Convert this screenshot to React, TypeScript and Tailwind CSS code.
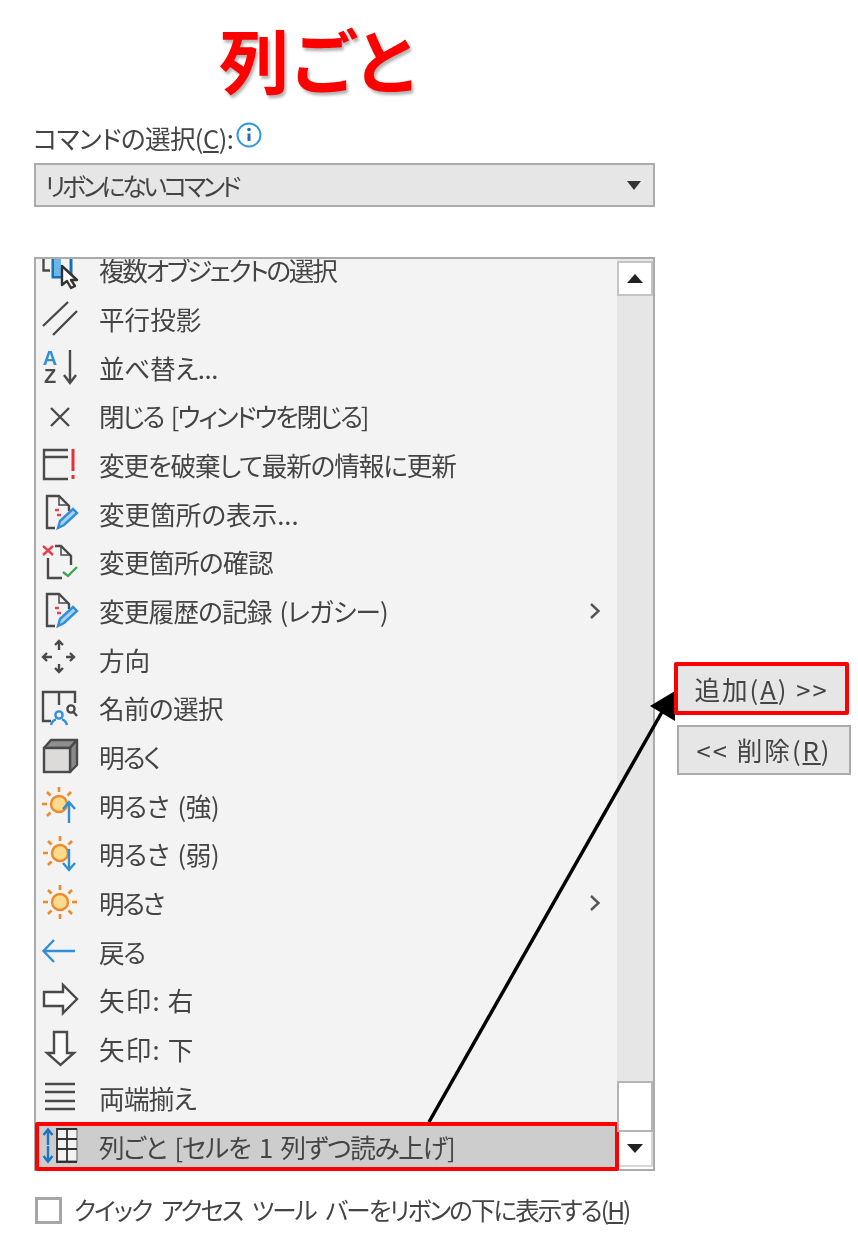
import type { ReactNode } from "react";

const BLUE = "#2f8fd8";
const DARK = "#4a4a4a";
const ORANGE = "#ee8a2a";

function Icon({ children }: { children: ReactNode }) {
  return (
    <svg width="40" height="40" viewBox="0 0 40 40" fill="none" strokeWidth="2.4" className="shrink-0 overflow-visible">
      {children}
    </svg>
  );
}

function DocPencil() {
  return (
    <Icon>
      <path d="M15 35H7V3H19L29 13V18" stroke={DARK} />
      <path d="M19 3V12H29" stroke={DARK} strokeWidth="1.5" />
      <path d="M15 17H19M17 22H21" stroke="#e8404a" />
      <path d="M18 35L20 28L33 16L37 20L24 32Z" fill="#a9d3f3" stroke={BLUE} />
    </Icon>
  );
}

function Sun({ cx, cy, bare }: { cx: number; cy: number; bare?: boolean }) {
  const rays = [0, 45, 90, 135, 180, 225, 270, 315];
  return (
    <g>
      <circle cx={cx} cy={cy} r="8" fill="#fbdc8e" stroke={ORANGE} />
      {rays.map((a) => {
        if (!bare && (a === 0 || a === 45 || a === 90)) return null;
        const r = (a * Math.PI) / 180;
        return (
          <line
            key={a}
            x1={cx + Math.cos(r) * 12}
            y1={cy + Math.sin(r) * 12}
            x2={cx + Math.cos(r) * 17}
            y2={cy + Math.sin(r) * 17}
            stroke={ORANGE}
            strokeWidth="2.6"
          />
        );
      })}
    </g>
  );
}

const rows: { label: string; icon: ReactNode; track: string; more?: boolean; selected?: boolean }[] = [
  {
    label: "複数オブジェクトの選択",
    track: "tracking-[-2.3px]",
    icon: (
      <Icon>
        <path d="M3.5 6V20.5H10" stroke={DARK} />
        <rect x="13" y="6" width="18" height="21" fill="#f3f3f3" stroke="#1472bd" strokeWidth="3" />
        <rect x="14" y="7" width="7" height="19" fill="#6db4e8" />
        <path d="M22 16L37 30H31L35 36L31 38L27 31L22 35Z" fill="#fff" stroke="#333" strokeLinejoin="round" />
      </Icon>
    ),
  },
  {
    label: "平行投影",
    track: "tracking-[0px]",
    icon: (
      <Icon>
        <path d="M3 27L28 3M13 36L37 12" stroke={DARK} />
      </Icon>
    ),
  },
  {
    label: "並べ替え...",
    track: "tracking-[-0.4px]",
    icon: (
      <Icon>
        <text x="10" y="18" textAnchor="middle" fontSize="20" fontWeight="700" fontFamily="'Liberation Sans', sans-serif" fill={BLUE}>A</text>
        <text x="10" y="36" textAnchor="middle" fontSize="20" fontWeight="700" fontFamily="'Liberation Sans', sans-serif" fill={DARK}>Z</text>
        <path d="M30 3V35M24 28L30 36L36 28" stroke={DARK} />
      </Icon>
    ),
  },
  {
    label: "閉じる [ウィンドウを閉じる]",
    track: "tracking-[-2.2px] [word-spacing:4px]",
    icon: (
      <Icon>
        <path d="M11 12L29 30M29 12L11 30" stroke={DARK} />
      </Icon>
    ),
  },
  {
    label: "変更を破棄して最新の情報に更新",
    track: "tracking-[-1.1px]",
    icon: (
      <Icon>
        <path d="M28 5H4V34H28M4 12H28" stroke={DARK} />
        <path d="M33 4V26" stroke="#e8303a" strokeWidth="3" />
        <path d="M33 30V34" stroke="#e8303a" strokeWidth="3" />
      </Icon>
    ),
  },
  { label: "変更箇所の表示...", track: "tracking-[0px]", icon: <DocPencil /> },
  {
    label: "変更箇所の確認",
    track: "tracking-[-0.6px]",
    icon: (
      <Icon>
        <path d="M3 4L13 13M13 4L3 13" stroke="#e8404a" />
        <path d="M15 4H21L31 14V23M8 16V36H22" stroke={DARK} />
        <path d="M21 4V13H31" stroke={DARK} strokeWidth="1.5" />
        <path d="M23 30L28 34L37 25" stroke="#3fa652" />
      </Icon>
    ),
  },
  { label: "変更履歴の記録 (レガシー)", track: "tracking-[-0.8px] [word-spacing:3px]", icon: <DocPencil />, more: true },
  {
    label: "方向",
    track: "tracking-[0px]",
    icon: (
      <Icon>
        <path d="M19 2V11M15 6L19 2L23 6M19 25V33M15 29L19 33L23 29M3 18H12M7 14L3 18L7 22M26 18H34M30 14L34 18L30 22" stroke={DARK} />
      </Icon>
    ),
  },
  {
    label: "名前の選択",
    track: "tracking-[-0.6px]",
    icon: (
      <Icon>
        <path d="M11 33H3V4H19V17M19 4H35V15" stroke={DARK} />
        <circle cx="19" cy="27" r="3.6" stroke={BLUE} />
        <path d="M11 37C12 33 15 31.5 16 31.5M27 37C26 33 23 31.5 22 31.5" stroke={BLUE} />
        <circle cx="31" cy="21" r="3.6" stroke={DARK} />
        <path d="M33.5 24L37 28" stroke={DARK} />
      </Icon>
    ),
  },
  {
    label: "明るく",
    track: "tracking-[-2px]",
    icon: (
      <Icon>
        <path d="M4 11L11 3H37L30 11Z" fill="#8f8f8f" stroke={DARK} strokeLinejoin="round" />
        <path d="M30 11L37 3V28L30 35Z" fill="#8a8a8a" stroke={DARK} strokeLinejoin="round" />
        <rect x="4" y="11" width="26" height="24" fill="#dcdbd9" stroke={DARK} />
      </Icon>
    ),
  },
  {
    label: "明るさ (強)",
    track: "tracking-[-0.4px] [word-spacing:3px]",
    icon: (
      <Icon>
        <Sun cx={19} cy={18} />
        <path d="M29 37V17M23 23L29 16L35 23" stroke={BLUE} />
      </Icon>
    ),
  },
  {
    label: "明るさ (弱)",
    track: "tracking-[-0.4px] [word-spacing:3px]",
    icon: (
      <Icon>
        <Sun cx={20} cy={19} />
        <path d="M29 15V35M23 29L29 36L35 29" stroke={BLUE} />
      </Icon>
    ),
  },
  {
    label: "明るさ",
    track: "tracking-[-2.5px]",
    icon: (
      <Icon>
        <Sun cx={20} cy={19} bare />
      </Icon>
    ),
    more: true,
  },
  {
    label: "戻る",
    track: "tracking-[-1.5px]",
    icon: (
      <Icon>
        <path d="M4 19H35M14 8L3.5 19L14 30" stroke={BLUE} />
      </Icon>
    ),
  },
  {
    label: "矢印: 右",
    track: "tracking-[1.2px]",
    icon: (
      <Icon>
        <path d="M4 12H23V5L37 19L23 33V26H4Z" fill="#fbfbfb" stroke={DARK} strokeLinejoin="miter" />
      </Icon>
    ),
  },
  {
    label: "矢印: 下",
    track: "tracking-[1.2px]",
    icon: (
      <Icon>
        <path d="M14 3H27V24H34L20.5 36L7 24H14Z" fill="#fbfbfb" stroke={DARK} />
      </Icon>
    ),
  },
  {
    label: "両端揃え",
    track: "tracking-[-0.7px]",
    icon: (
      <Icon>
        <path d="M5 6H35M5 14H35M5 23H35M5 31H35" stroke={DARK} />
      </Icon>
    ),
  },
  {
    label: "列ごと [セルを 1 列ずつ読み上げ]",
    track: "tracking-[-1.2px] [word-spacing:4px]",
    selected: true,
    icon: (
      <Icon>
        <rect x="17" y="2" width="20" height="32" fill="#f2f2f2" stroke="#8a8a8a" strokeWidth="1.5" />
        <path d="M17 1V35H37M17 2H37M17 12H37M17 22H37M27 2V34" stroke="#333" strokeWidth="1.8" />
        <path d="M8 18V3M3.5 8L8 2.5L12.5 8M8 19V34M3.5 29L8 34.5L12.5 29" stroke="#1b74c4" />
      </Icon>
    ),
  },
];

function Chevron() {
  return (
    <svg width="12" height="18" viewBox="0 0 12 18" fill="none" stroke="#555" strokeWidth="2.4" className="shrink-0">
      <path d="M2 2L9.5 9L2 16" />
    </svg>
  );
}

export default function App() {
  return (
    <div className="relative w-[858px] h-[1240px] overflow-hidden bg-white text-[#444] [font-family:'Noto_Sans_CJK_JP',sans-serif] [font-feature-settings:'palt'] blur-[0.4px]">
      <h1 className="h-[118px] pl-[219px] pt-[11px] text-[70px] leading-[96px] tracking-[3px] font-bold text-[#ff0000] [text-shadow:2px_3px_3px_rgba(0,0,0,0.3)]">
        列ごと
      </h1>

      <div className="flex items-start h-[45px] pl-[33px]">
        <span className="text-[25.6px] leading-[40px] tracking-[-0.6px]">
          コマンドの選択(<span className="underline">C</span>):
        </span>
        <svg width="26" height="26" viewBox="0 0 26 26" fill="none" className="ml-[3px] mt-[4px]">
          <circle cx="13" cy="13" r="11.5" stroke="#2f9ae0" strokeWidth="2" />
          <circle cx="13" cy="7.5" r="1.8" fill="#1f6fb5" />
          <path d="M13 11.5V19" stroke="#1f6fb5" strokeWidth="3" />
        </svg>
      </div>

      <div className="ml-[34px] w-[621px] h-[44px] flex items-center justify-between border-2 border-[#ababab] bg-[#e6e6e6] pl-[9px] pr-[12px]">
        <span className="text-[25px] leading-none tracking-[-3.4px]">リボンにないコマンド</span>
        <span className="w-0 h-0 border-x-[7px] border-t-[9px] border-x-transparent border-t-[#333]" />
      </div>

      <div className="flex items-start mt-[50px] ml-[34px]">
        <div className="flex w-[621px] h-[914px] border-2 border-[#ababab] bg-[#f3f3f3]">
          <div className="relative z-[1] flex-1 min-w-0 overflow-hidden flex flex-col justify-end -ml-px -mb-[2px] -mr-[2px]">
            {rows.map((r) =>
              r.selected ? (
                <div key={r.label} className="shrink-0 h-[49px] flex items-center border-4 border-[#ff0000] rounded-[2px] bg-[#cdcdcd] pl-px">
                  {r.icon}
                  <span className={`ml-[19px] text-[25.6px] leading-none whitespace-nowrap ${r.track}`}>{r.label}</span>
                </div>
              ) : (
                <div key={r.label} className="shrink-0 h-[48.7px] flex items-center pl-[5px] pr-[18px]">
                  {r.icon}
                  <span className={`ml-[19px] flex-1 text-[25.6px] leading-none whitespace-nowrap ${r.track}`}>{r.label}</span>
                  {r.more && <Chevron />}
                </div>
              )
            )}
          </div>
          <div className="w-[36px] shrink-0 flex flex-col bg-[#e6e6e6]">
            <div className="relative z-[2] mt-[2px] h-[35px] flex items-center justify-center border-2 border-[#c4c4c4] bg-white">
              <span className="w-0 h-0 border-x-[8px] border-b-[9px] border-x-transparent border-b-[#222]" />
            </div>
            <div className="flex-1" />
            <div className="relative z-[2] h-[51px] border-2 border-[#b4b4b4] bg-white" />
            <div className="ml-[2px] h-[35px] flex items-center justify-center border-2 border-t-0 border-l-0 border-[#d8d8d8] bg-white">
              <span className="w-0 h-0 border-x-[8px] border-t-[9px] border-x-transparent border-t-[#222]" />
            </div>
            <div className="h-[2px] bg-white" />
          </div>
        </div>

        <div className="relative z-10 ml-[19px] mt-[405px] flex flex-col">
          <div className="w-[175px] h-[53px] flex items-center justify-center border-4 border-[#ff0000] rounded-[2px] bg-[#e6e6e6] text-[25.6px] leading-none tracking-[2px] whitespace-nowrap">
            追加(<span className="underline">A</span>)&nbsp;&gt;&gt;
          </div>
          <div className="ml-[3px] mt-[10px] w-[174px] h-[50px] flex items-center justify-center border-2 border-[#ababab] bg-[#e6e6e6] text-[25.6px] leading-none tracking-[2px] whitespace-nowrap">
            &lt;&lt; 削除(<span className="underline">R</span>)
          </div>
        </div>
      </div>

      <div className="flex items-center mt-[26px] ml-[35px]">
        <span className="w-[27px] h-[27px] border-[3px] border-[#a6a6a6] bg-white" />
        <span className="ml-[12px] text-[24.5px] leading-none tracking-[-1.9px] [word-spacing:6px] whitespace-nowrap">
          クイック アクセス ツール バーをリボンの下に表示する(<span className="underline">H</span>)
        </span>
      </div>

      {/* arrow from the selected row up to the add button */}
      <svg width="858" height="1240" viewBox="0 0 858 1240" className="absolute inset-0 z-[5] pointer-events-none">
        <line x1="429" y1="1122" x2="662" y2="712" stroke="#000" strokeWidth="3.5" />
        <polygon points="650,706 675,691 675,721" fill="#000" />
      </svg>
    </div>
  );
}
